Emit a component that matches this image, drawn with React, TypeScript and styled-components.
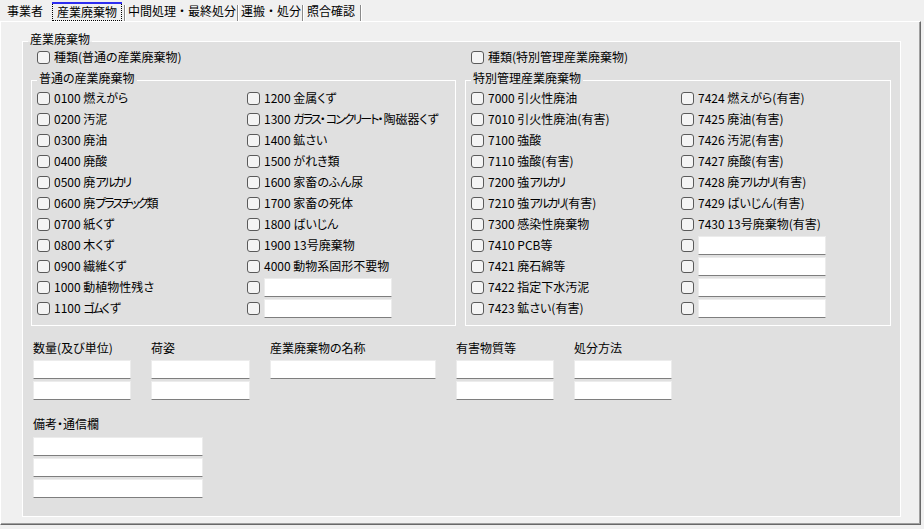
import React from 'react';
import styled, { createGlobalStyle } from 'styled-components';

const Global = createGlobalStyle`
  html, body { margin: 0; padding: 0; background: #f0f0f0; }
  body {
    font-family: "Noto Sans CJK JP", "Noto Sans", sans-serif;
    font-size: 12px;
    color: #000;
    font-feature-settings: "palt";
  }
`;

const Window = styled.div`
  width: 924px;
  height: 529px;
  background: #f0f0f0;
  overflow: hidden;
`;

const TabStrip = styled.div`
  display: flex;
  height: 21px;
  padding-left: 3px;
  box-sizing: border-box;
  font-feature-settings: normal;
`;

const Tab = styled.div<{ $pl: number; $pr: number }>`
  display: flex;
  align-items: center;
  height: 21px;
  padding: 1px ${(p) => p.$pr}px 0 ${(p) => p.$pl}px;
  box-sizing: border-box;
  line-height: 14px;
  white-space: nowrap;
`;

const ActiveTab = styled.div`
  display: flex;
  align-items: stretch;
  margin: 2px 2px 0 6px;
  border-top: 2px solid #2d2df0;
  white-space: nowrap;
`;

const FocusLabel = styled.span`
  display: flex;
  align-items: center;
  padding: 0 4px;
  border: 1px dotted #000;
  border-top: none;
  line-height: 14px;
`;

const TabSep = styled.span`
  width: 1px;
  margin-top: 5px;
  background: #8a8a8a;
  box-shadow: 1px 0 0 #fff;
`;

const Panel = styled.div`
  width: 921px;
  height: 504px;
  box-sizing: border-box;
  border-top: 1px solid #fff;
  border-left: 1px solid #fff;
  border-right: 1px solid #696969;
  border-bottom: 1px solid #696969;
  box-shadow: inset -1px -1px 0 #a0a0a0;
  padding: 19px 19px 0 21px;
`;

const GroupBox = styled.section<{ $padX: number; $padBottom: number; $mt?: number }>`
  border: 1px solid #fff;
  background: #e0e0e0;
  padding: 0 ${(p) => p.$padX}px ${(p) => p.$padBottom}px;
  margin-top: ${(p) => p.$mt ?? 0}px;
  min-width: 0;
`;

const GroupTitle = styled.div<{ $offset: number; $outer?: boolean }>`
  width: fit-content;
  margin: -10px 0 0 ${(p) => p.$offset}px;
  padding: 0 2px;
  line-height: 14px;
  height: 14px;
  white-space: nowrap;
  background: ${(p) =>
    p.$outer ? 'linear-gradient(#f0f0f0 0 10px, #e0e0e0 10px)' : '#e0e0e0'};
`;

const TwoCols = styled.div<{ $mt?: number }>`
  display: grid;
  grid-template-columns: 425px 426px;
  column-gap: 9px;
  align-items: start;
  margin-top: ${(p) => p.$mt ?? 0}px;
`;

const TypeCell = styled.div`
  padding-left: 6px;
  height: 14px;
  display: flex;
  align-items: center;
`;

const ItemGrid = styled.div`
  display: grid;
  grid-template-columns: 210px 1fr;
  grid-template-rows: repeat(11, 20px);
  grid-auto-flow: column;
  row-gap: 1px;
  margin-top: 3px;
`;

const Item = styled.label`
  display: flex;
  align-items: center;
  gap: 4px;
  height: 20px;
  line-height: 14px;
  white-space: nowrap;
`;

const Kana = styled.span`
  letter-spacing: -2px;
`;

const Check = styled.input.attrs({ type: 'checkbox' })`
  appearance: none;
  -webkit-appearance: none;
  margin: 0;
  width: 13px;
  height: 13px;
  flex: none;
  box-sizing: border-box;
  border: 1px solid #5a5a5a;
  border-radius: 3px;
  background: #f4f4f4;
`;

const TextBox = styled.input.attrs({ type: 'text' })<{ $w: number }>`
  width: ${(p) => p.$w}px;
  height: 19px;
  margin: 0;
  padding: 0 3px;
  box-sizing: border-box;
  background: #fff;
  border: 1px solid #ececec;
  border-bottom: 1px solid #7e7e7e;
  font: inherit;
  outline: none;
`;

const FieldRow = styled.div`
  display: flex;
  gap: 20px;
  padding-left: 2px;
  margin-top: 15px;
`;

const Field = styled.div`
  display: flex;
  flex-direction: column;
`;

const FieldLabel = styled.div`
  line-height: 14px;
  height: 14px;
  margin-bottom: 5px;
  white-space: nowrap;
`;

const Stack = styled.div`
  display: flex;
  flex-direction: column;
  gap: 2px;
`;

const Remarks = styled.div`
  display: flex;
  flex-direction: column;
  padding-left: 2px;
  margin-top: 17px;
`;

const RemarksLabel = styled(FieldLabel)`
  margin-bottom: 6px;
`;

type Cell = string | null;

const normalItems: Cell[] = [
  '0100 燃えがら', '0200 汚泥', '0300 廃油', '0400 廃酸', '0500 廃アルカリ',
  '0600 廃プラスチック類', '0700 紙くず', '0800 木くず', '0900 繊維くず',
  '1000 動植物性残さ', '1100 ゴムくず',
  '1200 金属くず', '1300 ガラス・コンクリート・陶磁器くず', '1400 鉱さい',
  '1500 がれき類', '1600 家畜のふん尿', '1700 家畜の死体', '1800 ばいじん',
  '1900 13号廃棄物', '4000 動物系固形不要物', null, null,
];

const specialItems: Cell[] = [
  '7000 引火性廃油', '7010 引火性廃油(有害)', '7100 強酸', '7110 強酸(有害)',
  '7200 強アルカリ', '7210 強アルカリ(有害)', '7300 感染性廃棄物', '7410 PCB等',
  '7421 廃石綿等', '7422 指定下水汚泥', '7423 鉱さい(有害)',
  '7424 燃えがら(有害)', '7425 廃油(有害)', '7426 汚泥(有害)', '7427 廃酸(有害)',
  '7428 廃アルカリ(有害)', '7429 ばいじん(有害)', '7430 13号廃棄物(有害)',
  null, null, null, null,
];

const KANA_RUN = /([\u30A1-\u30FA\u30FC]+)/;
const KANA_ONLY = /^[\u30A1-\u30FA\u30FC]+$/;

const KanaText: React.FC<{ text: string }> = ({ text }) => (
  <span>
    {text.split(KANA_RUN).map((p, i) =>
      KANA_ONLY.test(p) ? <Kana key={i}>{p}</Kana> : <React.Fragment key={i}>{p}</React.Fragment>
    )}
  </span>
);

const ItemList: React.FC<{ items: Cell[] }> = ({ items }) => (
  <ItemGrid>
    {items.map((t, i) => (
      <Item key={i}>
        <Check />
        {t === null ? <TextBox $w={128} /> : <KanaText text={t} />}
      </Item>
    ))}
  </ItemGrid>
);

const fields: { label: string; w: number; rows: number }[] = [
  { label: '数量(及び単位)', w: 98, rows: 2 },
  { label: '荷姿', w: 99, rows: 2 },
  { label: '産業廃棄物の名称', w: 166, rows: 1 },
  { label: '有害物質等', w: 98, rows: 2 },
  { label: '処分方法', w: 98, rows: 2 },
];

export default function App() {
  return (
    <Window>
      <Global />
      <TabStrip>
        <Tab $pl={4} $pr={3}>事業者</Tab>
        <ActiveTab>
          <FocusLabel>産業廃棄物</FocusLabel>
        </ActiveTab>
        <TabSep />
        <Tab $pl={3} $pr={1}>中間処理・最終処分</Tab>
        <TabSep />
        <Tab $pl={3} $pr={1}>運搬・処分</Tab>
        <TabSep />
        <Tab $pl={4} $pr={5}>照合確認</Tab>
        <TabSep />
      </TabStrip>
      <Panel>
        <GroupBox $padX={8} $padBottom={18}>
          <GroupTitle $offset={-3} $outer>産業廃棄物</GroupTitle>
          <TwoCols $mt={4}>
            <TypeCell>
              <Item>
                <Check />
                <span>種類(普通の産業廃棄物)</span>
              </Item>
            </TypeCell>
            <TypeCell>
              <Item>
                <Check />
                <span>種類(特別管理産業廃棄物)</span>
              </Item>
            </TypeCell>
          </TwoCols>
          <TwoCols $mt={16}>
            <GroupBox $padX={5} $padBottom={7}>
              <GroupTitle $offset={0}>普通の産業廃棄物</GroupTitle>
              <ItemList items={normalItems} />
            </GroupBox>
            <GroupBox $padX={5} $padBottom={7}>
              <GroupTitle $offset={0}>特別管理産業廃棄物</GroupTitle>
              <ItemList items={specialItems} />
            </GroupBox>
          </TwoCols>
          <FieldRow>
            {fields.map((f) => (
              <Field key={f.label}>
                <FieldLabel>{f.label}</FieldLabel>
                <Stack>
                  {Array.from({ length: f.rows }).map((_, i) => (
                    <TextBox key={i} $w={f.w} />
                  ))}
                </Stack>
              </Field>
            ))}
          </FieldRow>
          <Remarks>
            <RemarksLabel>備考・通信欄</RemarksLabel>
            <Stack>
              <TextBox $w={170} />
              <TextBox $w={170} />
              <TextBox $w={170} />
            </Stack>
          </Remarks>
        </GroupBox>
      </Panel>
    </Window>
  );
}
